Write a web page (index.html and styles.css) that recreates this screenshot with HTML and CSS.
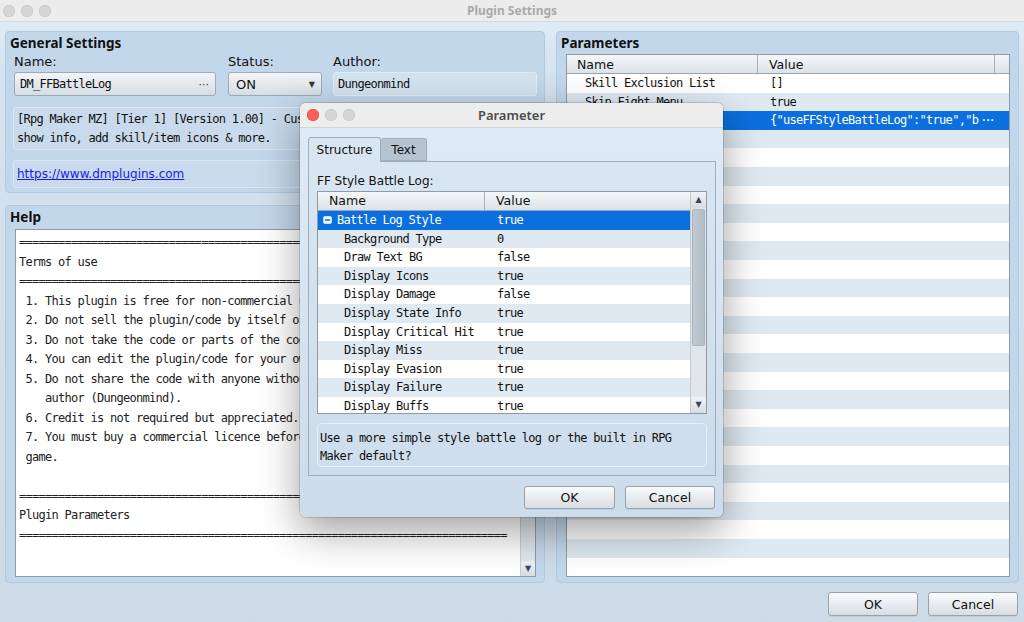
FILE: index.html
```html
<!DOCTYPE html>
<html lang="en">
<head>
  <meta charset="UTF-8" />
  <title>Plugin Settings</title>
  <link rel="stylesheet" href="styles.css">
</head>
<body>
  <div class="window">
    <div class="titlebar">
      <div class="lights">
        <span class="light"></span><span class="light"></span><span class="light"></span>
      </div>
      <div class="title">Plugin Settings</div>
      <div></div>
    </div>

    <div class="main">
      <div class="left-col">
        <section class="panel general">
          <h2 class="panel-title">General Settings</h2>
          <div class="field-row">
            <div class="field name-field">
              <label>Name:</label>
              <div class="pick-box mono">DM_FFBattleLog<span class="dots">···</span></div>
            </div>
            <div class="field status-field">
              <label>Status:</label>
              <div class="pick-box">ON<span class="arrow">▼</span></div>
            </div>
            <div class="field author-field">
              <label>Author:</label>
              <div class="text-box mono">Dungeonmind</div>
            </div>
          </div>
          <div class="desc-box mono">[Rpg Maker MZ] [Tier 1] [Version 1.00] - Customize the battle log to
show info, add skill/item icons &amp; more.</div>
          <div class="link-box"><a href="#">https://www.dmplugins.com</a></div>
        </section>

        <section class="panel help">
          <h2 class="panel-title">Help</h2>
          <div class="help-area">
            <pre class="help-text mono">===========================================================================
Terms of use
===========================================================================
 1. This plugin is free for non-commercial use in your RPG Maker games.
 2. Do not sell the plugin/code by itself or as part of a bundle.
 3. Do not take the code or parts of the code and claim it as your own.
 4. You can edit the plugin/code for your own use and purposes.
 5. Do not share the code with anyone without permission from the
    author (Dungeonmind).
 6. Credit is not required but appreciated.
 7. You must buy a commercial licence before releasing a commercial
 game.

===========================================================================
Plugin Parameters
===========================================================================</pre>
            <div class="vscroll">
              <span class="sarrow">▲</span>
              <span class="sarrow">▼</span>
            </div>
          </div>
        </section>
      </div>

      <section class="panel params">
        <h2 class="panel-title">Parameters</h2>
        <div class="ptable">
          <div class="ptable-head">
            <div class="pcol-name">Name</div>
            <div class="pcol-value">Value</div>
            <div class="pcol-end"></div>
          </div>
          <div class="ptable-body mono">
            <div class="prow">
              <div class="pcell-name">Skill Exclusion List</div>
              <div class="pcell-value">[]</div>
            </div>
            <div class="prow">
              <div class="pcell-name">Skip Fight Menu</div>
              <div class="pcell-value">true</div>
            </div>
            <div class="prow selected">
              <div class="pcell-name">FF Style Battle Log</div>
              <div class="pcell-value">{"useFFStyleBattleLog":"true","b<span class="ell">···</span></div>
            </div>
          </div>
        </div>
      </section>
    </div>

    <div class="footer">
      <button class="btn">OK</button>
      <button class="btn">Cancel</button>
    </div>
  </div>

  <!-- Parameter dialog window -->
  <div class="dialog">
    <div class="dlg-titlebar">
      <div class="lights dlg-lights">
        <span class="light red"></span><span class="light"></span><span class="light"></span>
      </div>
      <div class="dlg-title">Parameter</div>
      <div></div>
    </div>
    <div class="dlg-body">
      <div class="tabs">
        <div class="tab active">Structure</div>
        <div class="tab">Text</div>
      </div>
      <div class="tab-panel">
        <div class="tab-label">FF Style Battle Log:</div>
        <div class="tree">
          <div class="tree-main">
            <div class="tree-head">
              <div class="tcol-name">Name</div>
              <div class="tcol-value">Value</div>
            </div>
            <div class="tree-body mono">
              <div class="trow selected">
                <div class="tcell-name parent"><svg class="minus" width="9" height="8" viewBox="0 0 9 8"><rect x="0.5" y="0.5" width="8" height="7" rx="1.5" fill="#eef4fb" stroke="#cfe0f5"/><line x1="2" y1="4" x2="7" y2="4" stroke="#0b6fde" stroke-width="1.4"/></svg><span>Battle Log Style</span></div>
                <div class="tcell-value">true</div>
              </div>
              <div class="trow"><div class="tcell-name">Background Type</div><div class="tcell-value">0</div></div>
              <div class="trow"><div class="tcell-name">Draw Text BG</div><div class="tcell-value">false</div></div>
              <div class="trow"><div class="tcell-name">Display Icons</div><div class="tcell-value">true</div></div>
              <div class="trow"><div class="tcell-name">Display Damage</div><div class="tcell-value">false</div></div>
              <div class="trow"><div class="tcell-name">Display State Info</div><div class="tcell-value">true</div></div>
              <div class="trow"><div class="tcell-name">Display Critical Hit</div><div class="tcell-value">true</div></div>
              <div class="trow"><div class="tcell-name">Display Miss</div><div class="tcell-value">true</div></div>
              <div class="trow"><div class="tcell-name">Display Evasion</div><div class="tcell-value">true</div></div>
              <div class="trow"><div class="tcell-name">Display Failure</div><div class="tcell-value">true</div></div>
              <div class="trow"><div class="tcell-name">Display Buffs</div><div class="tcell-value">true</div></div>
            </div>
          </div>
          <div class="tree-scroll">
            <span class="sarrow">▲</span>
            <div class="thumb-track"><div class="thumb"></div></div>
            <span class="sarrow">▼</span>
          </div>
        </div>
        <div class="dlg-desc mono">Use a more simple style battle log or the built in RPG
Maker default?</div>
      </div>
      <div class="dlg-buttons">
        <button class="btn ok">OK</button>
        <button class="btn">Cancel</button>
      </div>
    </div>
  </div>
</body>
</html>
```

FILE: styles.css
```css
* {
  box-sizing: border-box;
}

html, body {
  margin: 0;
}

body {
  width: 1024px;
  height: 622px;
  overflow: hidden;
  position: relative;
  font-family: "DejaVu Sans", sans-serif;
  font-size: 12px;
  color: #111;
  background: linear-gradient(to bottom, #e2edf8 0, #d4e2ef 80px, #cddbe8 100%);
}

.mono {
  font-family: "DejaVu Sans Mono", monospace;
  font-size: 12px;
  letter-spacing: -0.72px;
  font-variant-ligatures: none;
}

/* window chrome */
.titlebar {
  height: 22px;
  display: grid;
  grid-template-columns: 1fr auto 1fr;
  align-items: center;
  background: #ececec;
  border-bottom: 1px solid #dadada;
}

.lights {
  display: flex;
  gap: 6px;
  padding-left: 3px;
}

.light {
  width: 12px;
  height: 12px;
  border-radius: 50%;
  background: #d5d5d5;
  box-shadow: inset 0 0 0 0.5px #c4c4c4;
}

.light.red {
  background: #fe5f57;
  box-shadow: inset 0 0 0 0.5px #e0443e;
}

.title {
  font-family: "Noto Sans", sans-serif;
  font-weight: 700;
  font-size: 12px;
  color: #a9a9a9;
}

.main {
  height: 561px;
  display: flex;
  gap: 11px;
  padding: 9px 5px 0 5px;
}

.left-col {
  width: 540px;
  display: flex;
  flex-direction: column;
  gap: 12px;
}

.panel {
  background: #c3d7ea;
  border: 1px solid #b3c9dd;
  border-radius: 4px;
}

.panel-title {
  margin: 0;
  padding: 3px 0 0 4px;
  font-family: "Noto Sans", sans-serif;
  font-weight: 700;
  font-size: 13.5px;
  line-height: 16px;
  color: #111;
}

/* general settings */
.general {
  height: 162px;
}

.field-row {
  display: flex;
  margin: 3px 0 0 8px;
}

.field label {
  display: block;
  font-size: 13px;
  line-height: 15px;
  height: 15px;
}

.name-field {
  width: 202px;
  margin-right: 12px;
}

.status-field {
  width: 94px;
  margin-right: 11px;
}

.author-field {
  width: 204px;
}

.pick-box {
  margin-top: 3px;
  height: 24px;
  display: flex;
  align-items: center;
  justify-content: space-between;
  padding: 0 6px 0 7px;
  background: linear-gradient(to bottom, #f2f5f8, #d5dde4);
  border: 1px solid #9ea9b3;
  border-radius: 3px;
  font-size: 13px;
}

.name-field .pick-box {
  padding-left: 5px;
  font-size: 12px;
}

.dots {
  font-family: "DejaVu Sans", sans-serif;
  letter-spacing: 0;
  font-size: 11px;
  color: #333;
}

.arrow {
  font-size: 8px;
  color: #333;
}

.text-box {
  margin-top: 3px;
  height: 24px;
  line-height: 22px;
  padding-left: 4px;
  background: #d3e2ef;
  border: 1px solid #e2ecf5;
  border-radius: 3px;
}

.desc-box {
  margin: 11px 7px 0 7px;
  height: 43px;
  padding: 2px 3px 0 3px;
  line-height: 19px;
  white-space: pre;
  overflow: hidden;
  background: #c8daeb;
  border: 1px solid #dce8f3;
  border-radius: 3px;
}

.link-box {
  margin: 10px 7px 0 7px;
  height: 28px;
  padding-left: 3px;
  line-height: 27px;
  background: #c8daeb;
  border: 1px solid #dce8f3;
  border-radius: 3px;
}

.link-box a {
  color: #1a1ae6;
  font-size: 12px;
}

/* help */
.help {
  height: 378px;
}

.help-area {
  margin: 4px 8px 0 9px;
  height: 348px;
  display: flex;
  background: #fff;
  border: 1px solid #8d9ba8;
}

.help-text {
  flex: 1;
  margin: 0;
  padding: 3px 0 0 3px;
  line-height: 19.5px;
  white-space: pre;
  overflow: hidden;
  color: #222;
}

.vscroll {
  width: 15px;
  display: flex;
  flex-direction: column;
  justify-content: space-between;
  background: #dfe6ec;
  border-left: 1px solid #c5ced6;
}

.sarrow {
  display: block;
  height: 15px;
  line-height: 15px;
  text-align: center;
  font-size: 8px;
  color: #3c4650;
  background: linear-gradient(to bottom, #f0f3f6, #d6dde3);
}

/* parameters */
.params {
  width: 463px;
  height: 552px;
}

.ptable {
  margin: 3px 8px 0 9px;
  height: 523px;
  display: flex;
  flex-direction: column;
  background: #fff;
  border: 1px solid #8e9ba7;
}

.ptable-head {
  height: 19px;
  flex-shrink: 0;
  display: flex;
  background: linear-gradient(to bottom, #f5f7f9, #dce2e7);
  border-bottom: 1px solid #9aa5af;
  line-height: 19px;
  font-size: 12.5px;
}

.pcol-name {
  width: 191px;
  padding-left: 10px;
  border-right: 1px solid #a8b1ba;
}

.pcol-value {
  width: 237px;
  padding-left: 11px;
  border-right: 1px solid #a8b1ba;
}

.pcol-end {
  flex: 1;
}

.ptable-body {
  flex: 1;
  background: repeating-linear-gradient(to bottom, #fff 0, #fff 18.6px, #dfe9f1 18.6px, #dfe9f1 37.2px);
}

.prow {
  display: flex;
  height: 18.6px;
  line-height: 19.6px;
  white-space: pre;
}

.prow.selected,
.trow.selected {
  background: #0b6fde;
  color: #fff;
}

.pcell-name {
  width: 191px;
  padding-left: 18px;
}

.pcell-value {
  padding-left: 12px;
}

.ell {
  letter-spacing: -3px;
  margin-left: 2px;
}

.footer {
  height: 39px;
  display: flex;
  justify-content: flex-end;
  gap: 10px;
  padding: 9px 6px 0 0;
}

.btn {
  width: 90px;
  height: 24px;
  padding: 0;
  font-family: "DejaVu Sans", sans-serif;
  font-size: 12.5px;
  color: #111;
  background: linear-gradient(to bottom, #fafbfc, #d7dde3);
  border: 1px solid #98a2ab;
  border-radius: 3px;
  box-shadow: 0 1px 0 rgba(0, 0, 0, 0.06);
}

/* dialog */
.dialog {
  position: absolute;
  left: 300px;
  top: 103px;
  width: 423px;
  height: 414px;
  border-radius: 6px;
  overflow: hidden;
  background: linear-gradient(to bottom, #dfebf7, #cddcea);
  box-shadow: 0 0 0 1px rgba(0, 0, 0, 0.14), 0 14px 40px rgba(0, 0, 0, 0.38);
}

.dlg-titlebar {
  height: 25px;
  display: grid;
  grid-template-columns: 1fr auto 1fr;
  align-items: center;
  background: #ededed;
  border-bottom: 1px solid #d3d3d3;
}

.dlg-lights {
  padding-left: 7px;
}

.dlg-title {
  font-family: "Noto Sans", sans-serif;
  font-weight: 600;
  font-size: 13px;
  color: #4c4c4c;
}

.dlg-body {
  padding: 9px 7px 0 8px;
}

.tabs {
  display: flex;
  align-items: flex-end;
  height: 24px;
}

.tab {
  height: 23px;
  line-height: 23px;
  text-align: center;
  font-size: 12px;
  border: 1px solid #9eadba;
  border-radius: 3px 3px 0 0;
}

.tab.active {
  width: 73px;
  height: 25px;
  margin-bottom: -1px;
  line-height: 25px;
  background: #d8e6f3;
  border-bottom: none;
  position: relative;
  z-index: 1;
}

.tab:not(.active) {
  width: 46px;
  background: #b6c4d1;
  border-left: none;
}

.tab-panel {
  height: 315px;
  padding: 11px 8px 8px 8px;
  background: linear-gradient(to bottom, #d8e6f3, #cddcea);
  border: 1px solid #9eadba;
}

.tab-label {
  line-height: 17px;
  height: 16px;
  font-size: 12px;
}

.tree {
  margin-top: 2px;
  height: 223px;
  display: flex;
  background: #fff;
  border: 1px solid #8e9ba7;
}

.tree-main {
  flex: 1;
  display: flex;
  flex-direction: column;
  overflow: hidden;
}

.tree-head {
  height: 19px;
  flex-shrink: 0;
  display: flex;
  line-height: 18px;
  font-size: 12.5px;
  background: linear-gradient(to bottom, #f5f7f9, #dce2e7);
  border-bottom: 1px solid #9aa5af;
}

.tcol-name {
  width: 167px;
  padding-left: 11px;
  border-right: 1px solid #a8b1ba;
}

.tcol-value {
  padding-left: 11px;
}

.tree-body {
  flex: 1;
  overflow: hidden;
  background: repeating-linear-gradient(to bottom, #fff 0, #fff 18.6px, #dfe9f1 18.6px, #dfe9f1 37.2px);
}

.trow {
  display: flex;
  height: 18.6px;
  line-height: 18.6px;
  white-space: pre;
}

.tcell-name {
  width: 167px;
  padding-left: 26px;
}

.tcell-name.parent {
  padding-left: 5px;
  display: flex;
  align-items: center;
  gap: 5px;
}

.minus {
  flex-shrink: 0;
}

.tcell-value {
  padding-left: 12px;
}

.tree-scroll {
  width: 16px;
  display: flex;
  flex-direction: column;
  background: #dfe5ea;
  border-left: 1px solid #c2cbd3;
}

.tree-scroll .sarrow {
  height: 16px;
  line-height: 16px;
}

.thumb-track {
  flex: 1;
  padding: 1px 1px 0 1px;
}

.thumb {
  height: 137px;
  background: linear-gradient(to right, #c1cad2, #b3bdc6);
  border: 1px solid #a9b3bc;
  border-radius: 2px;
}

.dlg-desc {
  margin-top: 9px;
  height: 44px;
  padding: 5px 2px 0 2px;
  line-height: 18px;
  white-space: pre;
  background: #cfdeec;
  border: 1px solid #e6eef6;
  border-radius: 4px;
}

.dlg-buttons {
  display: flex;
  justify-content: flex-end;
  gap: 10px;
  margin-top: 10px;
  padding-right: 1px;
}

.dlg-buttons .btn {
  height: 23px;
}

.dlg-buttons .btn.ok {
  width: 91px;
}
```
